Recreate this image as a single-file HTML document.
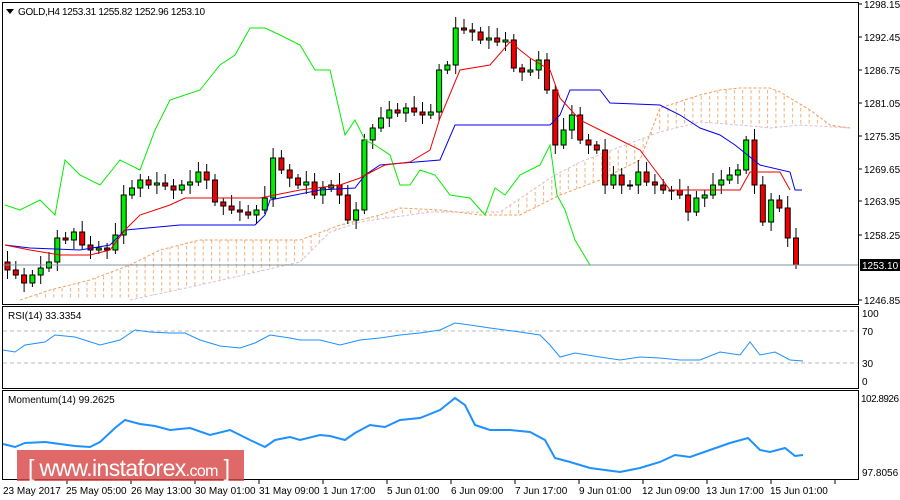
<!DOCTYPE html>
<html><head><meta charset="utf-8"><style>
body{margin:0;background:#fff;}
svg{display:block;font-family:"Liberation Sans",sans-serif;font-size:10px;}
</style></head><body>
<svg id="s" width="900" height="500" xmlns="http://www.w3.org/2000/svg">
<rect width="900" height="500" fill="#fff"/>
<defs>
<pattern id="h" width="8.3" height="6" patternUnits="userSpaceOnUse"><line x1="4" y1="0" x2="4" y2="3.5" stroke="#f0b078" stroke-width="1"/></pattern>
</defs>
<g id="cloud"></g>
<polyline fill="none" stroke="#d8c0d8" stroke-width="1" stroke-dasharray="3,2" points="130,300 200,285 300,262 330,232 360,222 430,212 500,212 550,178 580,162 620,147 660,132 700,122 740,125 770,128 800,125 850,128"/>
<polyline fill="none" stroke="#f0a060" stroke-width="1" stroke-dasharray="3,2" points="20,300 50,290 90,280 130,265 160,250 200,240 260,240 300,240 340,225 380,215 400,208 440,210 480,215 520,215 560,195 600,180 640,160 660,108 700,95 720,90 740,88 770,88 780,92 810,110 830,125 850,128"/>
<g id="candles"></g>
<polyline fill="none" stroke="#00ee00" stroke-width="1" points="5,205 20,210 40,200 55,215 65,160 80,175 100,185 120,160 140,170 155,130 170,100 200,90 220,65 235,55 250,28 265,28 280,35 300,45 315,70 330,70 345,135 355,120 365,140 375,145 390,155 400,185 410,185 420,170 435,175 450,195 470,198 485,215 495,188 505,195 520,175 540,165 550,145 557,195 565,210 575,240 590,265"/>
<polyline fill="none" stroke="#0000ee" stroke-width="1" points="5,245 30,248 80,250 110,245 125,230 180,225 255,225 265,215 270,200 320,190 355,188 365,175 380,165 440,160 455,125 550,125 560,115 570,90 600,90 610,103 660,105 680,115 700,128 720,135 735,145 760,165 790,172 795,190 802,190"/>
<polyline fill="none" stroke="#ee0000" stroke-width="1" points="5,245 30,250 60,255 90,255 110,250 125,230 140,215 170,205 185,198 210,198 260,198 275,195 300,190 340,185 360,178 375,170 385,165 410,162 430,150 440,118 460,70 490,65 510,42 530,58 550,70 560,98 580,120 600,130 620,140 640,150 655,170 670,190 700,190 720,190 740,190 750,172 780,172 790,190"/>
<line x1="2" y1="265" x2="858" y2="265" stroke="#8090a0"/>
<rect x="2.5" y="2.5" width="856" height="302" fill="none" stroke="#000"/>
<rect x="2.5" y="306.5" width="856" height="82" fill="none" stroke="#000"/>
<rect x="2.5" y="390.5" width="856" height="89" fill="none" stroke="#000"/>
<line x1="3" y1="331" x2="858" y2="331" stroke="#bbb" stroke-dasharray="4,3"/>
<line x1="3" y1="363" x2="858" y2="363" stroke="#bbb" stroke-dasharray="4,3"/>
<polyline fill="none" stroke="#1e90ff" stroke-width="1" points="3,350 15,352 25,345 45,342 55,335 75,337 100,345 120,340 135,330 150,332 170,333 185,333 200,340 220,346 240,348 255,343 270,335 290,338 300,340 320,340 340,345 360,340 380,338 400,335 420,333 440,330 455,323 470,325 490,328 520,332 540,335 550,345 560,357 575,353 600,357 620,360 640,357 660,358 680,360 700,360 720,352 740,355 750,342 760,355 775,352 790,360 803,361"/>
<polyline fill="none" stroke="#1e90ff" stroke-width="2" points="3,444 15,447 25,443 45,442 60,444 75,446 90,447 100,442 115,428 125,420 140,424 155,426 170,430 190,428 210,435 230,430 250,440 265,447 275,440 290,437 300,440 320,435 330,436 345,440 355,433 370,425 385,427 400,420 420,418 440,410 455,398 465,405 475,425 490,430 510,430 530,432 545,440 555,458 570,462 590,468 605,470 620,472 640,468 660,462 675,455 690,457 710,450 730,443 748,438 760,450 770,452 785,448 795,456 803,455"/>
<polygon points="6,9 14,9 10,14" fill="#000"/>
<text x="18" y="15" textLength="187">GOLD,H4  1253.31 1255.82 1252.96 1253.10</text>
<text x="8" y="319">RSI(14) 33.3354</text>
<text x="8" y="403">Momentum(14) 99.2625</text>
<g fill="#000">
<text x="864" y="8">1298.15</text>
<text x="864" y="41">1292.45</text>
<text x="864" y="74">1286.75</text>
<text x="864" y="107">1281.05</text>
<text x="864" y="140">1275.35</text>
<text x="864" y="173">1269.65</text>
<text x="864" y="205">1263.95</text>
<text x="864" y="239">1258.25</text>
<text x="864" y="304">1246.85</text>
<text x="862" y="317">100</text>
<text x="862" y="335">70</text>
<text x="862" y="367">30</text>
<text x="862" y="385">0</text>
<text x="861" y="402" textLength="38">102.8926</text>
<text x="862" y="476">97.8056</text>
</g>
<rect x="860" y="259" width="40" height="12" fill="#000"/>
<text x="862" y="269" fill="#fff">1253.10</text>
<g stroke="#000"><line x1="859" y1="4" x2="862" y2="4"/><line x1="859" y1="37" x2="862" y2="37"/><line x1="859" y1="70" x2="862" y2="70"/><line x1="859" y1="103" x2="862" y2="103"/><line x1="859" y1="136" x2="862" y2="136"/><line x1="859" y1="169" x2="862" y2="169"/><line x1="859" y1="201" x2="862" y2="201"/><line x1="859" y1="235" x2="862" y2="235"/><line x1="859" y1="300" x2="862" y2="300"/></g>
<g id="ticks" stroke="#000"></g>
<g fill="#000">
<text x="3" y="494">23 May 2017</text>
<text x="66" y="494">25 May 05:00</text>
<text x="131" y="494">26 May 13:00</text>
<text x="195" y="494">30 May 01:00</text>
<text x="259" y="494">31 May 09:00</text>
<text x="323" y="494">1 Jun 17:00</text>
<text x="387" y="494">5 Jun 01:00</text>
<text x="451" y="494">6 Jun 09:00</text>
<text x="515" y="494">7 Jun 17:00</text>
<text x="579" y="494">9 Jun 01:00</text>
<text x="642" y="494">12 Jun 09:00</text>
<text x="706" y="494">13 Jun 17:00</text>
<text x="770" y="494">15 Jun 01:00</text>
</g>
<rect x="17" y="450" width="227" height="31" fill="#d84848" opacity="0.82"/>
<text x="28" y="476" fill="#fff" font-size="23" textLength="202">[ www.instaforex<tspan font-size="16">.com</tspan> ]</text>
</svg>
<script>
var c=[262,270,275,283,275,268,262,238,240,232,245,250,248,250,235,195,188,180,185,183,186,190,185,182,172,180,202,206,210,212,215,210,198,158,170,178,185,182,195,188,185,195,220,210,140,128,118,110,113,108,112,115,112,70,65,28,30,32,40,38,42,40,68,72,70,60,90,145,130,115,140,145,150,185,175,185,185,172,182,185,190,190,195,212,198,195,185,180,175,170,140,185,222,200,208,238,265];
var g=document.getElementById('candles'),s='';
for(var i=1;i<c.length;i++){var x=5+(i-1)*8.3,o=c[i-1],cl=c[i];var t=Math.min(o,cl),b=Math.max(o,cl);if(b-t<1)b=t+1;
var hi=t-4-((i*7)%9),lo=b+4+((i*5)%10);
s+='<line x1="'+(x+2.5)+'" y1="'+hi+'" x2="'+(x+2.5)+'" y2="'+lo+'" stroke="#000"/>';
s+='<rect x="'+x+'" y="'+t+'" width="5" height="'+(b-t)+'" fill="'+(cl<o?'#00ee00':'#ee0000')+'" stroke="#000" stroke-width="1"/>';}
g.innerHTML=s;
document.getElementById('cloud').innerHTML='<polygon fill="url(#h)" points="20,300 50,290 90,280 130,265 160,250 200,240 260,240 300,240 340,225 380,215 400,208 440,210 480,215 520,215 560,195 600,180 640,160 660,108 700,95 720,90 740,88 770,88 780,92 810,110 830,125 850,128 850,128 800,125 770,128 740,125 700,122 660,132 620,147 580,162 550,178 500,212 430,212 360,222 330,232 300,262 200,285 130,300"/>';
var tk='';for(var x=67;x<858;x+=64)tk+='<line x1="'+x+'" y1="480" x2="'+x+'" y2="484"/>';
document.getElementById('ticks').innerHTML=tk;
</script>
</body></html>
